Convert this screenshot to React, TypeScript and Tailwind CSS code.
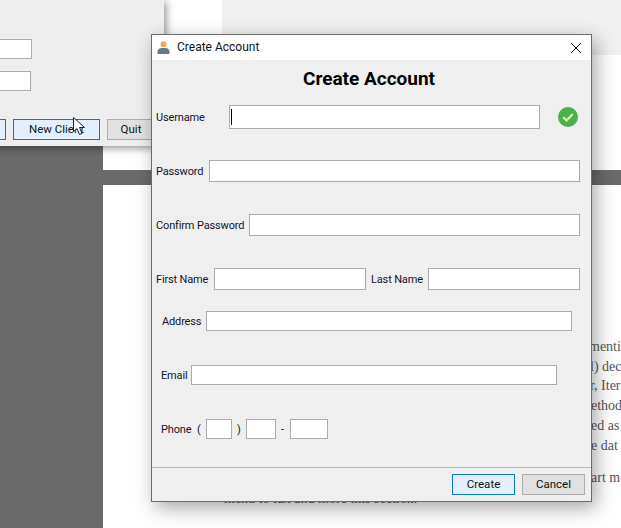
import { ReactNode } from "react";

const label = "text-[11px] leading-none whitespace-nowrap text-[#14142a] tracking-[-0.15px]";

function Box({ className }: { className: string }) {
  return <input readOnly className={`block shrink-0 bg-white border border-[#aaaab0] outline-none ${className}`} />;
}

function Btn({ children, active, className }: { children: ReactNode; active?: boolean; className: string }) {
  return (
    <div
      className={`flex shrink-0 items-center justify-center border text-[11.5px] text-[#111] ${
        active ? "border-[#0a78d4] bg-[#e3f0fb]" : "border-[#adadad] bg-[#e1e1e1]"
      } ${className}`}
    >
      {children}
    </div>
  );
}

const pageLines = [
  { text: "menti", cls: "ml-[4px]" },
  { text: "l) dec", cls: "ml-[5px]" },
  { text: "r, Iter", cls: "ml-[5px]" },
  { text: "ethod", cls: "ml-[6px]" },
  { text: "ed as", cls: "ml-[6px]" },
  { text: "e dat", cls: "ml-[6px]" },
];

export default function App() {
  return (
    <div className="relative w-[621px] h-[528px] overflow-hidden bg-[#6a6a6a] font-['Roboto',sans-serif]">
      {/* document behind */}
      <div className="absolute left-[103px] top-[146px] right-0 bottom-0 flex flex-col bg-white">
        <div className="h-[24px]" />
        <div className="h-[15px] bg-[#6a6a6a]" />
      </div>
      <div className="absolute left-[164px] top-0 right-0 h-[146px] bg-white" />
      <div className="absolute left-[222px] top-0 right-0 h-[55px] bg-[#f0f0f0]" />

      <div className="absolute left-[585px] top-[337px] w-[36px] overflow-hidden font-['Liberation_Serif',serif] text-[14px] leading-[19.7px] text-[#555] whitespace-nowrap">
        {pageLines.map((l) => (
          <div key={l.text} className={l.cls}>{l.text}</div>
        ))}
        <div className="mt-[13px] ml-[6px]">art m</div>
      </div>
      <div className="absolute left-[224px] top-[489px] font-['Liberation_Serif',serif] text-[14px] leading-[19.7px] text-[#555] whitespace-nowrap">
        menu to fax and more this section.
      </div>

      {/* main window behind */}
      <div className="absolute left-[-100px] top-0 w-[264px] h-[146px] bg-[#eeeeee] pt-[39px] shadow-[2px_2px_8px_rgba(0,0,0,0.45)]">
        <Box className="w-[132px] h-[20px]" />
        <Box className="w-[131px] h-[20px] mt-[12px]" />
        <div className="flex gap-[7px] mt-[28px]">
          <Btn active className="w-[106px] h-[21px]"> </Btn>
          <Btn active className="w-[87px] h-[21px]">New Client</Btn>
          <Btn className="w-[48px] h-[21px]">Quit</Btn>
        </div>
      </div>

      {/* mouse pointer */}
      <svg className="absolute left-[73px] top-[117px]" width="13" height="19" viewBox="0 0 13 19">
        <path d="M0.5 0.5 L0.5 14.5 L4 11.5 L6.5 17.5 L9 16.5 L6.5 10.5 L11.5 10.5 Z" fill="#fff" stroke="#222" strokeWidth="1" />
      </svg>

      {/* Create Account dialog */}
      <div className="absolute left-[151px] top-[34px] w-[441px] h-[468px] flex flex-col bg-[#efefef] border border-[#6b6b6b] shadow-[4px_6px_18px_rgba(0,0,0,0.35)]">
        <div className="flex items-center h-[25px] shrink-0 bg-white pl-[5px] pr-[10px]">
          <svg width="13" height="13" viewBox="0 0 13 13">
            <circle cx="6.5" cy="3.2" r="3" fill="#f5a947" />
            <path d="M0.5 13 V10.5 C0.5 8.5 2.5 7 4.5 7 H8.5 C10.5 7 12.5 8.5 12.5 10.5 V13 Z" fill="#5d7f92" />
          </svg>
          <span className="ml-[7px] text-[12px] text-[#111] -translate-y-px">Create Account</span>
          <svg className="ml-auto" width="10" height="10" viewBox="0 0 10 10">
            <path d="M0 0 L10 10 M10 0 L0 10" stroke="#111" strokeWidth="1" />
          </svg>
        </div>

        <div className="h-[36px] shrink-0 flex items-center justify-center pr-[5px] text-[19px] font-bold text-black leading-none">
          Create Account
        </div>

        <div className="flex items-center h-[24px] mt-[9px] pl-[4px] shrink-0">
          <span className={`${label} w-[73px]`}>Username</span>
          <div className="relative">
            <Box className="w-[311px] h-[24px]" />
            <div className="absolute left-[2px] top-[4px] w-px h-[16px] bg-black" />
          </div>
          <svg className="ml-[18px]" width="20" height="20" viewBox="0 0 20 20">
            <circle cx="10" cy="10" r="10" fill="#4caf50" />
            <path d="M5.2 10.3 L8.6 13.4 L14.8 7" fill="none" stroke="#d4f79a" strokeWidth="2.2" />
          </svg>
        </div>

        <div className="flex items-center h-[22px] mt-[31px] pl-[4px] shrink-0">
          <span className={`${label} w-[53px]`}>Password</span>
          <Box className="w-[371px] h-[22px]" />
        </div>

        <div className="flex items-center h-[22px] mt-[32px] pl-[4px] shrink-0">
          <span className={`${label} w-[93px]`}>Confirm Password</span>
          <Box className="w-[331px] h-[22px]" />
        </div>

        <div className="flex items-center h-[22px] mt-[32px] pl-[4px] shrink-0">
          <span className={`${label} w-[58px]`}>First Name</span>
          <Box className="w-[152px] h-[22px]" />
          <span className={`${label} w-[57px] ml-[5px]`}>Last Name</span>
          <Box className="w-[152px] h-[22px]" />
        </div>

        <div className="flex items-center h-[20px] mt-[21px] pl-[10px] shrink-0">
          <span className={`${label} w-[44px]`}>Address</span>
          <Box className="w-[366px] h-[20px]" />
        </div>

        <div className="flex items-center h-[20px] mt-[34px] pl-[9px] shrink-0">
          <span className={`${label} w-[30px]`}>Email</span>
          <Box className="w-[366px] h-[20px]" />
        </div>

        <div className="flex items-center h-[20px] mt-[34px] pl-[9px] shrink-0">
          <span className={`${label} w-[36px]`}>Phone</span>
          <span className={`${label} w-[9px]`}>(</span>
          <Box className="w-[26px] h-[20px]" />
          <span className={`${label} w-[14px] pl-[5px]`}>)</span>
          <Box className="w-[30px] h-[20px]" />
          <span className={`${label} w-[14px] pl-[5px]`}>-</span>
          <Box className="w-[38px] h-[20px]" />
        </div>

        <div className="mt-auto h-[34px] shrink-0 flex justify-end items-start gap-[7px] pt-[6px] pr-[6px] border-t border-[#b9b9b9]">
          <Btn active className="w-[63px] h-[21px]">Create</Btn>
          <Btn className="w-[63px] h-[21px]">Cancel</Btn>
        </div>
      </div>
    </div>
  );
}
